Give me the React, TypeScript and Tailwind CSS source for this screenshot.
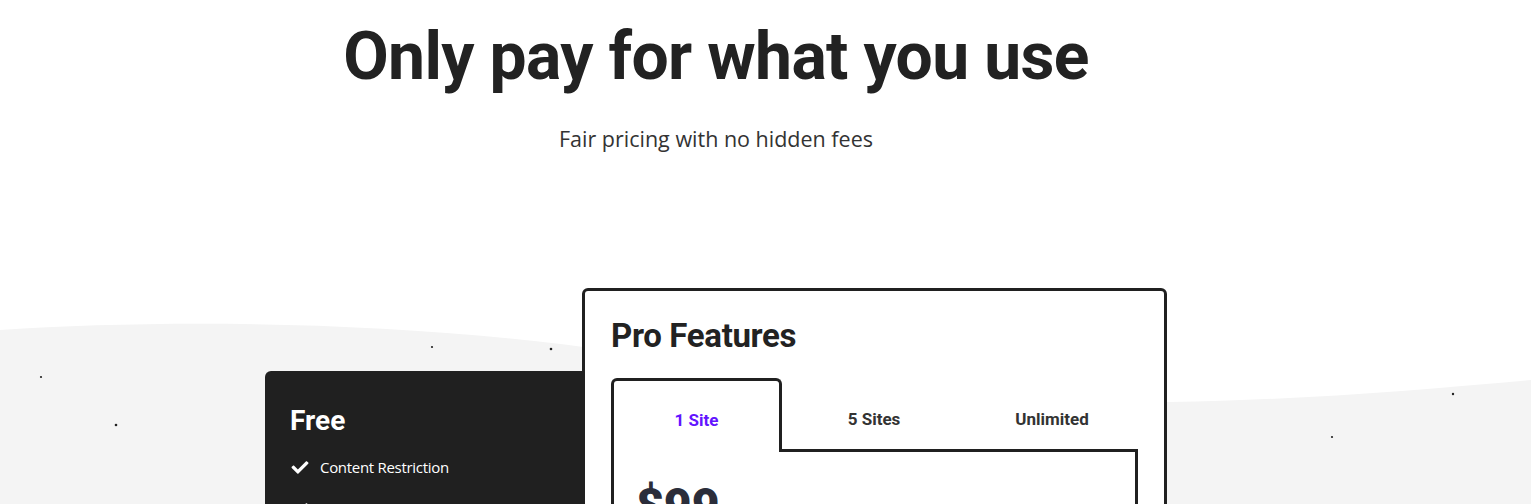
import React from 'react';
import { FaCheck } from 'react-icons/fa';

const stars = [
    [41, 377, 1.1],
    [116, 425, 1.3],
    [432, 347, 1.1],
    [551, 349, 1.3],
    [1332, 437, 1.1],
    [1453, 394, 1.2],
];

const Wave: React.FC = () => (
    <svg
        className="absolute inset-0 w-full h-full pointer-events-none"
        viewBox="0 0 1531 504"
        preserveAspectRatio="none"
    >
        <path
            d="M0,330 C180,318 420,322 620,352 C820,385 1000,404 1170,402 C1300,400 1420,390 1531,380 L1531,504 L0,504 Z"
            fill="#f4f4f4"
        />
        {stars.map(([x, y, r], i) => (
            <circle key={i} cx={x} cy={y} r={r} fill="#222" />
        ))}
    </svg>
);

const tabs = ['1 Site', '5 Sites', 'Unlimited'];

export default function App() {
    const active = 0;

    return (
        <div className="relative w-full h-[504px] overflow-hidden bg-white text-[#222]">
            <Wave />
            <div className="relative flex flex-col items-center pr-[99px]">
                <h1
                    className="mt-[22px] text-[66px] leading-[70px] font-bold tracking-[-0.01em]"
                    style={{ fontFamily: 'Roboto, sans-serif' }}
                >
                    Only pay for what you use
                </h1>
                <p
                    className="mt-[33px] text-[21.5px] leading-[28px] text-[#333]"
                    style={{ fontFamily: '"Open Sans", sans-serif' }}
                >
                    Fair pricing with no hidden fees
                </p>

                <div className="mt-[135px] flex items-start" style={{ fontFamily: 'Roboto, sans-serif' }}>
                    {/* free plan */}
                    <div className="w-[325px] h-[200px] mt-[83px] bg-[#202020] rounded-tl-md px-[25px] pt-[32px] text-white">
                        <h3 className="text-[28px] leading-[36px] font-bold">Free</h3>
                        <ul className="mt-[17px] space-y-[20px]" style={{ fontFamily: '"Open Sans", sans-serif' }}>
                            <li className="flex items-center gap-[10px] text-[15px] tracking-[-0.02em]">
                                <FaCheck className="w-[20px] h-[17px]" />
                                <span>Content Restriction</span>
                            </li>
                            <li className="flex items-center gap-[10px] text-[15px] tracking-[-0.02em]">
                                <FaCheck className="w-[20px] h-[17px]" />
                                <span>Member Directory</span>
                            </li>
                        </ul>
                    </div>

                    {/* pro plan */}
                    <div className="relative z-10 -ml-[8px] w-[585px] h-[260px] bg-white border-[3px] border-[#202020] rounded-md px-[26px] pt-[27px]">
                        <h2 className="text-[33px] leading-[36px] font-bold tracking-[-0.01em]">Pro Features</h2>
                        <div className="mt-[24px] flex">
                            {tabs.map((t, i) => (
                                <button
                                    key={t}
                                    className={
                                        i === active
                                            ? 'w-[171px] h-[74px] border-[3px] border-b-0 border-[#202020] rounded-t-md bg-white text-[17px] font-bold text-[#6314ff] pt-[8px]'
                                            : 'flex-1 h-[74px] border-b-[3px] border-[#202020] text-[17px] font-bold text-[#333] pl-[6px] pt-[12px]'
                                    }
                                >
                                    {t}
                                </button>
                            ))}
                        </div>
                        <div className="-mt-[3px] h-[120px] border-x-[3px] border-[#202020] px-[22px] pt-[29px]">
                            <div className="text-[48px] leading-[56px] font-black text-[#2b2d3a]">$99</div>
                        </div>
                    </div>
                </div>
            </div>
        </div>
    );
}
